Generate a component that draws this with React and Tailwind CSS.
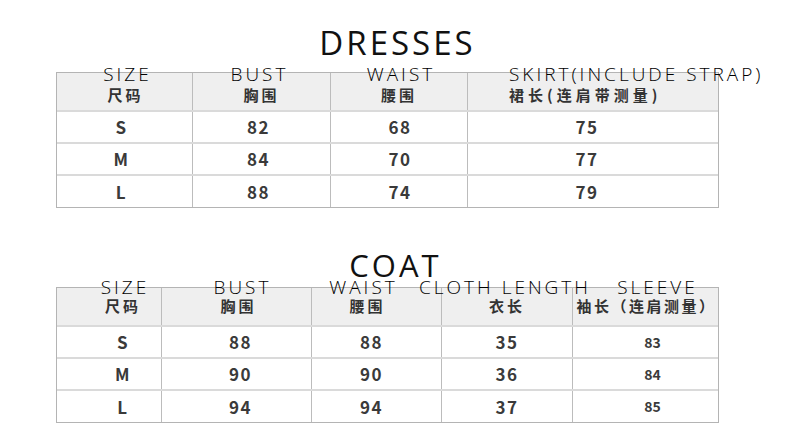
const dresses = {
  cols: 'grid-cols-[135px_138px_137px_251px]',
  head: [
    { en: 'SIZE', zh: '尺码', cls: 'items-center pl-[2px]', enCls: 'ml-[4px]', zhCls: 'tracking-[3px]' },
    { en: 'BUST', zh: '胸围', cls: 'items-center', enCls: '-ml-[4px]', zhCls: 'tracking-[3px]' },
    { en: 'WAIST', zh: '腰围', cls: 'items-center', enCls: 'ml-[4px]', zhCls: 'tracking-[3px]' },
    { en: 'SKIRT(INCLUDE STRAP)', zh: '裙长(连肩带测量)', cls: 'items-start pl-[41px]', enCls: '', zhCls: 'tracking-[4px]' },
  ],
  rows: [
    ['S', '82', '68', '75'],
    ['M', '84', '70', '77'],
    ['L', '88', '74', '79'],
  ],
  cellPad: ['pr-[6px]', 'pr-[6px]', 'pl-[2px]', 'pr-[12px]'],
};

const coat = {
  cols: 'grid-cols-[104px_150px_130px_131px_146px]',
  head: [
    { en: 'SIZE', zh: '尺码', cls: 'items-center pl-[28px]', enCls: 'ml-[4px]', zhCls: 'tracking-[3px]' },
    { en: 'BUST', zh: '胸围', cls: 'items-center pl-[4px]', enCls: 'ml-[8px]', zhCls: 'tracking-[3px]' },
    { en: 'WAIST', zh: '腰围', cls: 'items-center pr-[18px]', enCls: '-ml-[8px]', zhCls: 'tracking-[3px]' },
    { en: 'CLOTH LENGTH', zh: '衣长', cls: 'items-center', enCls: '-ml-[4px]', zhCls: 'tracking-[3px]' },
    { en: 'SLEEVE', zh: '袖长（连肩测量）', cls: 'items-center pl-[2px]', enCls: 'ml-[22px]', zhCls: 'tracking-[2.5px]' },
  ],
  rows: [
    ['S', '88', '88', '35', '83'],
    ['M', '90', '90', '36', '84'],
    ['L', '94', '94', '37', '85'],
  ],
  cellPad: ['pl-[28px]', 'pl-[8px]', 'pr-[10px]', 'pl-[0px]', 'pl-[14px]'],
};

const enFont = { fontFamily: '"Open Sans", "Liberation Sans", sans-serif' };
const zhFont = { fontFamily: '"Noto Sans CJK SC", sans-serif' };

function SizeTable({ data, lift, gap, lastSmall }) {
  return (
    <div className="ml-[56px] w-[663px] border border-[#b4b4b4]">
      <div className={`grid ${data.cols} h-[37px] bg-[#efefef]`}>
        {data.head.map((h, i) => (
          <div key={i} className={`flex flex-col ${h.cls} ${i > 0 ? 'border-l border-[#bcbcbc]' : ''}`}>
            <div
              className={`${lift} ${h.enCls} text-[19px] leading-[19px] font-light tracking-[3px] text-black whitespace-nowrap`}
              style={enFont}
            >
              {h.en}
            </div>
            <div
              className={`${gap} ${h.zhCls} text-[15px] leading-[15px] font-bold text-[#333] whitespace-nowrap`}
              style={zhFont}
            >
              {h.zh}
            </div>
          </div>
        ))}
      </div>
      {data.rows.map((row, r) => (
        <div
          key={r}
          className={`grid ${data.cols} border-t-2 border-[#dadada] ${r === 2 ? 'h-[33px]' : 'h-[32px]'}`}
        >
          {row.map((v, i) => (
            <div
              key={i}
              className={`flex items-center justify-center ${data.cellPad[i]} ${i > 0 ? 'border-l border-[#bcbcbc]' : ''} ${
                lastSmall && i === row.length - 1 ? 'text-[14px] tracking-[0px]' : 'text-[17px] tracking-[1.5px]'
              } font-bold text-[#3a3a3a]`}
              style={zhFont}
            >
              {v}
            </div>
          ))}
        </div>
      ))}
    </div>
  );
}

export default function App() {
  return (
    <div className="w-[789px] h-[446px] bg-white overflow-hidden pt-[26px]">
      <div
        className="text-center text-[33px] leading-[33px] tracking-[3px] text-[#111] pl-[6px]"
        style={enFont}
      >
        DRESSES
      </div>
      <div className="mt-[13px]">
        <SizeTable data={dresses} lift="-mt-[8px]" gap="mt-[3px]" />
      </div>
      <div
        className="mt-[42px] text-center text-[31px] leading-[31px] tracking-[3px] text-[#111] pl-[2px]"
        style={enFont}
      >
        COAT
      </div>
      <div className="mt-[6px]">
        <SizeTable data={coat} lift="-mt-[10px]" gap="mt-[1px]" lastSmall />
      </div>
    </div>
  );
}
